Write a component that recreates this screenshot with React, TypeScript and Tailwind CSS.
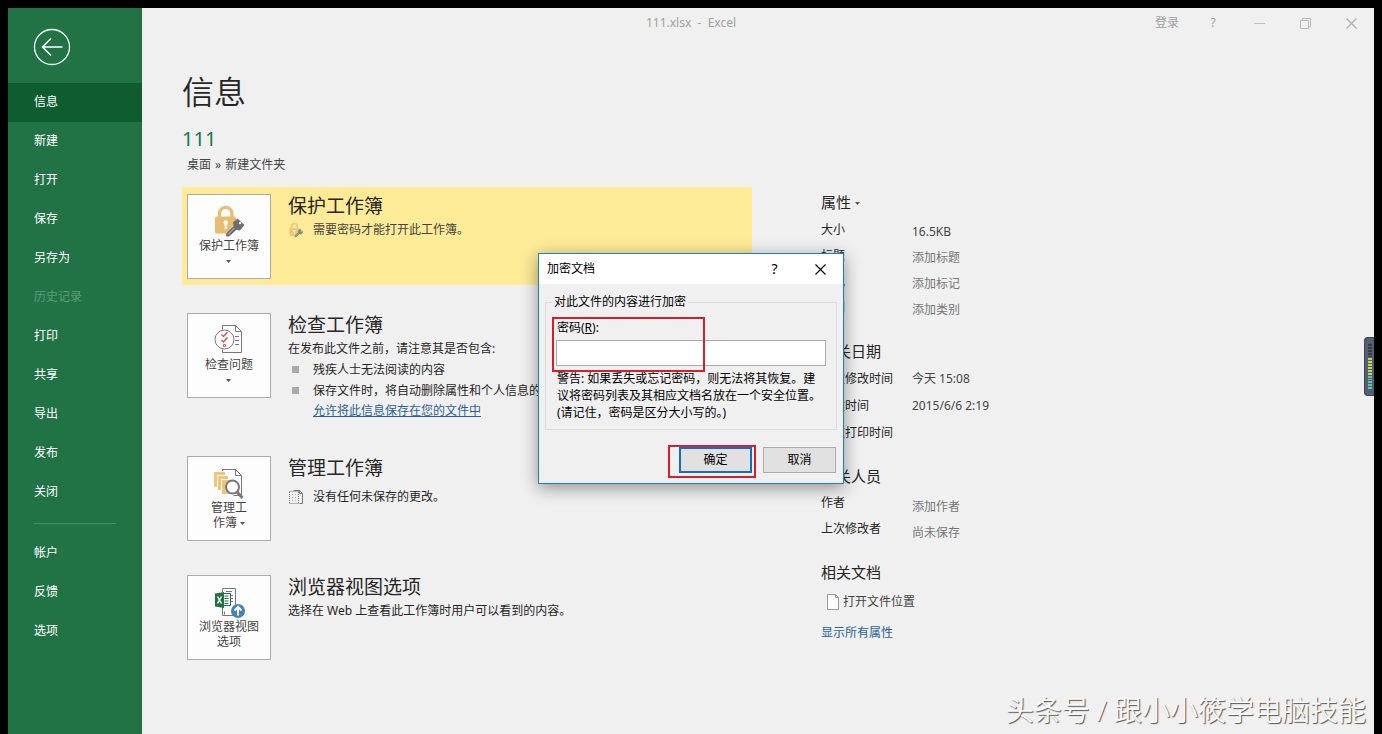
import React, { useState } from 'react';

interface Property {
  label: string;
  value: string;
  muted?: boolean;
}

const mainMenu = ['信息', '新建', '打开', '保存', '另存为', '历史记录', '打印', '共享', '导出', '发布', '关闭'];
const footerMenu = ['帐户', '反馈', '选项'];

const basicProps: Property[] = [
  { label: '大小', value: '16.5KB' },
  { label: '标题', value: '添加标题', muted: true },
  { label: '标记', value: '添加标记', muted: true },
  { label: '类别', value: '添加类别', muted: true },
];

const dateProps: Property[] = [
  { label: '上次修改时间', value: '今天 15:08' },
  { label: '创建时间', value: '2015/6/6 2:19' },
  { label: '上次打印时间', value: '' },
];

const peopleProps: Property[] = [
  { label: '作者', value: '添加作者', muted: true },
  { label: '上次修改者', value: '尚未保存', muted: true },
];

const Caret: React.FC = () => (
  <svg width="5" height="3" viewBox="0 0 5 3" className="inline-block align-middle" fill="#555">
    <path d="M0 0h5L2.5 3z" />
  </svg>
);

const LockKey: React.FC<{ className: string }> = ({ className }) => (
  <svg viewBox="0 0 32 34" className={className}>
    <path d="M6.5 13V9.500a6.200 6.200 0 0 1 12.400 0V13" fill="none" stroke="#e8bd72" strokeWidth="3.200" />
    <path d="M3.500 12.500h18a1.500 1.500 0 0 1 1.500 1.500v4l-9 11.500H3.500A1.500 1.500 0 0 1 2 28V14a1.500 1.500 0 0 1 1.500-1.500z" fill="#e8bd72" />
    <circle cx="12.700" cy="18.500" r="2.200" fill="#fff" />
    <path d="M11.700 19h2v6h-2z" fill="#fff" />
    <path d="M24.500 14.500l7 6.500-4.500 5.500-3.500-.8-7.500 6.800-3-.3.200-2.800 7.300-7.400-.5-3.500z" fill="#6d6d6d" />
    <circle cx="27" cy="19" r="1.200" fill="#fff" />
    <path d="M15 30.500l6.500-6.500" stroke="#ddd" strokeWidth=".8" />
  </svg>
);

const InspectIcon: React.FC = () => (
  <svg viewBox="0 0 32 34" className="h-[34px] w-8" fill="none" stroke="#777">
    <path d="M9.500 6.500v-4h13l6 6v21h-19v-3" fill="#fff" />
    <path d="M22.500 2.500v6h6M22 13.500h4M22 17.500h4M22 21.500h4" />
    <circle cx="11.500" cy="16.500" r="9.500" fill="#fff" />
    <path d="M8.500 11.500l2 2 4-4.500M8.500 17l2 2 4-4.500" stroke="#d9534a" strokeWidth="1.500" />
    <path d="M10.500 21.500h2v2h-2z" stroke="#d9534a" />
  </svg>
);

const ManageIcon: React.FC = () => (
  <svg viewBox="0 0 32 34" className="h-[34px] w-8" fill="none">
    <path d="M9.500 5V3.500h13l6 6v20h-8" fill="#fff" stroke="#777" />
    <path d="M22.500 3.500v6h6" stroke="#777" />
    <path d="M1 6h11v15H1z" fill="#efc57c" />
    <path d="M4.500 9.500h11v15h-11z" fill="#efc57c" stroke="#fff" />
    <path d="M8.500 13.500h11v15h-11z" fill="#efc57c" stroke="#fff" />
    <circle cx="19.500" cy="21" r="6.500" fill="#fff" stroke="#777" strokeWidth="2" />
    <path d="M24 26l5.500 6" stroke="#777" strokeWidth="3" />
  </svg>
);

const BrowserIcon: React.FC = () => (
  <svg viewBox="0 0 32 34" className="h-[34px] w-8" fill="none">
    <path d="M9.500 7V3.500h13v27h-13V22" fill="#fff" stroke="#777" />
    <path d="M13 6.500h6M17 10.500h3M17 13.500h3M17 16.500h3M11.500 26.500v3" stroke="#777" />
    <path d="M9 8.500h8.500v12H9z" fill="#fff" stroke="#217346" />
    <path d="M11.500 11h4M11.500 13.500h4M11.500 16h4M11.500 18.500h4" stroke="#217346" />
    <path d="M2 8.500l9-1.500v16l-9-1.500z" fill="#217346" />
    <path d="M4.500 11.500l4 7M8.500 11.500l-4 7" stroke="#fff" strokeWidth="1.400" />
    <circle cx="25" cy="26" r="7" fill="#4383bd" />
    <path d="M25 30.500v-8M21.500 25.500l3.500-3.500 3.500 3.500" stroke="#fff" strokeWidth="2" />
  </svg>
);

const DraftIcon: React.FC = () => (
  <svg width="16" height="16" viewBox="0 0 16 16" fill="none" stroke="#777">
    <path d="M5.500 1.500h6l3 3v10h-3" />
    <path d="M11.500 1.500v3h3" />
    <path d="M1.500 3v11M1.500 2.500h9M1.500 14.500h9M10.500 3v11" strokeDasharray="1 1" />
    <path d="M4.500 5v7M7.500 5v7" stroke="#aaa" strokeDasharray="1 2" />
  </svg>
);

interface SectionProps {
  icon: React.ReactNode;
  button: React.ReactNode;
  title: string;
  className?: string;
  children: React.ReactNode;
}

const Section: React.FC<SectionProps> = ({ icon, button, title, className, children }) => (
  <section className={`flex items-start gap-[17px] px-[5px] ${className ?? ''}`}>
    <button className="mt-[7px] flex h-[85px] w-[84px] shrink-0 flex-col items-center border border-[#ababab] bg-[#fdfdfd] pt-[9px] text-center leading-[15px] text-[#444]">
      {icon}
      <span>{button}</span>
    </button>
    <div className="min-w-0 pt-[5px] leading-5">
      <h2 className="text-[19px] leading-7">{title}</h2>
      {children}
    </div>
  </section>
);

const PropertyList: React.FC<{ items: Property[]; row: string; labelClass?: string }> = ({ items, row, labelClass }) => (
  <dl>
    {items.map((item) => (
      <div key={item.label} className={`flex items-center ${row}`}>
        <dt className={`w-[91px] shrink-0 ${labelClass ?? ''}`}>{item.label}</dt>
        <dd className={item.muted ? 'text-[#777]' : 'text-[#444]'}>{item.value}</dd>
      </div>
    ))}
  </dl>
);

const EncryptDialog: React.FC = () => {
  const [password, setPassword] = useState('');

  return (
    <div className="absolute inset-0 flex items-center justify-center pt-[3px]">
      <div role="dialog" aria-labelledby="dialog-title" className="relative w-[306px] border border-[#1a7fc4] bg-[#f0f0f0] text-black shadow-[0_4px_16px_rgba(0,0,0,0.4)]">
        <div className="flex h-[30px] items-center bg-white pl-2">
          <h2 id="dialog-title" className="flex-1">加密文档</h2>
          <button aria-label="帮助" className="w-[45px] text-sm">?</button>
          <button aria-label="关闭" className="flex w-[46px] justify-center">
            <svg width="11" height="11" viewBox="0 0 11 11" stroke="#000" strokeWidth="1.100">
              <path d="M.5.5l10 10M10.500.5l-10 10" />
            </svg>
          </button>
        </div>

        <form className="px-1.5 pt-2.5 pb-2.5" onSubmit={(e) => e.preventDefault()}>
          <fieldset className="border border-[#dcdcdc] px-2.5 pb-2">
            <legend className="-ml-1 px-0.5 leading-4">对此文件的内容进行加密</legend>
            <label htmlFor="password" className="mt-2.5 block pl-px leading-4">
              密码(<u>R</u>):
            </label>
            <input
              id="password"
              type="password"
              value={password}
              onChange={(e) => setPassword(e.target.value)}
              className="mt-1 block h-[26px] w-full border border-[#ababab] bg-white px-1 outline-none"
            />
            <p className="mt-1 pl-px leading-[17px] whitespace-nowrap">
              警告: 如果丢失或忘记密码，则无法将其恢复。建
              <br />
              议将密码列表及其相应文档名放在一个安全位置。
              <br />
              (请记住，密码是区分大小写的。)
            </p>
          </fieldset>
          <div className="mt-[17px] flex justify-end gap-[11px] pr-px">
            <button type="submit" className="h-[26px] w-[73px] border-2 border-[#0f6fc0] bg-[#e1e1e1]">确定</button>
            <button type="button" className="h-[26px] w-[73px] border border-[#adadad] bg-[#e1e1e1]">取消</button>
          </div>
        </form>

        {/* Highlight frames */}
        <div className="pointer-events-none absolute top-[63px] left-[13px] h-[55px] w-[153px] border-2 border-[#d61f2c]" />
        <div className="pointer-events-none absolute top-[191px] left-[129px] h-[33px] w-[88px] border-2 border-[#d61f2c]" />
      </div>
    </div>
  );
};

const App: React.FC = () => {
  const [active, setActive] = useState('信息');

  return (
    <div className="relative flex min-h-screen overflow-hidden bg-black px-2 pt-2 font-['Noto_Sans','Noto_Sans_CJK_SC',sans-serif] text-xs text-[#262626]">
      {/* Sidebar */}
      <nav className="w-[134px] shrink-0 bg-[#217346] text-white">
        <div className="h-[75px] pt-5 pl-[25px]">
          <button aria-label="返回" className="block">
            <svg width="38" height="38" viewBox="0 0 38 38" fill="none" stroke="#fff">
              <circle cx="19" cy="19" r="17.500" strokeWidth="1.300" />
              <path d="M29.500 19h-19M18 10.500L9.500 19l8.500 8.500" strokeWidth="1.500" />
            </svg>
          </button>
        </div>
        {mainMenu.map((item) => (
          <button
            key={item}
            disabled={item === '历史记录'}
            onClick={() => setActive(item)}
            className={`block h-[39px] w-full pb-0.5 pl-[26px] text-left disabled:text-[#5a9c77] ${
              active === item ? 'bg-[#0e5c2f]' : ''
            }`}
          >
            {item}
          </button>
        ))}
        <hr className="mx-[26px] mt-[11px] mb-2.5 border-[#439467]" />
        {footerMenu.map((item) => (
          <button key={item} onClick={() => setActive(item)} className="block h-[39px] w-full pb-0.5 pl-[26px] text-left">
            {item}
          </button>
        ))}
      </nav>

      <main className="relative min-w-0 flex-1 bg-[#f0f0f0]">
        {/* Title bar */}
        <header className="flex h-[30px] items-center text-[#a0a0a0]">
          <h1 className="flex-1 pl-[85px] text-center whitespace-pre">111.xlsx  -  Excel</h1>
          <button className="w-[26px] text-left whitespace-nowrap">登录</button>
          <button aria-label="帮助" className="ml-[9px] w-[46px]">?</button>
          <button aria-label="最小化" className="flex w-[46px] justify-center">
            <svg width="11" height="11" viewBox="0 0 11 11" fill="none" stroke="#c0c0c0">
              <path d="M0 5.500h11" />
            </svg>
          </button>
          <button aria-label="还原" className="flex w-[46px] justify-center">
            <svg width="11" height="11" viewBox="0 0 11 11" fill="none" stroke="#b8b8b8">
              <path d="M.5 2.500h8v8h-8zM2.500 2.500v-2h8v8h-2" />
            </svg>
          </button>
          <button aria-label="关闭" className="flex w-[46px] justify-center">
            <svg width="11" height="11" viewBox="0 0 11 11" fill="none" stroke="#b0b0b0" strokeWidth="1.300">
              <path d="M.5.5l10 10M10.500.5l-10 10" />
            </svg>
          </button>
        </header>

        <div className="pt-[34px] pl-10">
          <h1 className="text-[32px] leading-10 font-[350]">信息</h1>
          <p className="mt-[13px] text-xl leading-7 text-[#217346]">111</p>
          <p className="mt-1 flex gap-1 pl-[5px] leading-4 text-[#444]">
            <span>桌面</span>
            <span>»</span>
            <span>新建文件夹</span>
          </p>

          <div className="mt-3.5 flex items-start gap-[69px]">
            <div className="w-[570px]">
              <Section
                className="mb-[21px] h-[98px] bg-[#fdeb98]"
                icon={<LockKey className="h-[34px] w-8" />}
                title="保护工作簿"
                button={<>保护工作簿<br /><Caret /></>}
              >
                <p className="flex items-center gap-[9px] text-[#444]">
                  <LockKey className="h-4 w-4 opacity-80" />
                  需要密码才能打开此工作簿。
                </p>
              </Section>

              <Section
                className="h-[143px]"
                icon={<InspectIcon />}
                title="检查工作簿"
                button={<>检查问题<br /><Caret /></>}
              >
                <p>在发布此文件之前，请注意其是否包含:</p>
                <ul className="leading-[21px]">
                  <li className="flex items-center gap-3.5 pl-1 before:size-[7px] before:bg-[#aaa]">残疾人士无法阅读的内容</li>
                  <li className="flex items-center gap-3.5 pl-1 before:size-[7px] before:bg-[#aaa]">保存文件时，将自动删除属性和个人信息的设置</li>
                </ul>
                <a href="#" className="ml-[25px] text-[#2a6096] underline">允许将此信息保存在您的文件中</a>
              </Section>

              <Section
                className="h-[119px]"
                icon={<ManageIcon />}
                title="管理工作簿"
                button={<>管理工<br />作簿 <Caret /></>}
              >
                <p className="mt-[5px] flex items-center gap-[9px]">
                  <DraftIcon />
                  没有任何未保存的更改。
                </p>
              </Section>

              <Section icon={<BrowserIcon />} title="浏览器视图选项" button={<>浏览器视图<br />选项</>}>
                <p>选择在 Web 上查看此工作簿时用户可以看到的内容。</p>
              </Section>
            </div>

            {/* Document properties */}
            <aside className="min-w-0 flex-1 pt-[3px]">
              <h3 className="mb-[5px] text-[15px] leading-6">
                <button>属性 <Caret /></button>
              </h3>
              <PropertyList items={basicProps} row="h-[26px]" labelClass="pb-1" />
              <h3 className="mt-4 mb-0.5 text-[15px] leading-6">相关日期</h3>
              <PropertyList items={dateProps} row="h-[27px]" />
              <h3 className="mt-[18px] mb-1.5 text-[15px] leading-6">相关人员</h3>
              <PropertyList items={peopleProps} row="h-[26px]" labelClass="pb-2" />
              <h3 className="mt-3.5 mb-2 text-[15px] leading-6">相关文档</h3>
              <a href="#" className="flex items-center gap-1 pl-1.5 leading-5 text-[#444]">
                <svg width="12" height="16" viewBox="0 0 12 16" fill="#fdfdfd" stroke="#999">
                  <path d="M.5.5h8l3 3v12H.5zM8.500.5v3h3" />
                </svg>
                打开文件位置
              </a>
              <a href="#" className="mt-[11px] block leading-5 text-[#2a6096]">显示所有属性</a>
            </aside>
          </div>
        </div>

        {/* Floating meter at the window edge */}
        <div className="absolute top-[329px] right-0 flex h-[59px] w-2.5 flex-col gap-px rounded-l border border-r-0 border-[#3c4252] bg-[#565e74] px-[3px] py-1.5">
          {Array.from({ length: 16 }, (_, i) => (
            <span
              key={i}
              className={`h-0.5 w-1 ${i < 5 ? 'bg-[#353b4b]' : i < 11 ? 'bg-[#c8d256]' : 'bg-[#5fc8a4]'}`}
            />
          ))}
        </div>

        <p className="absolute right-2 bottom-1 text-[28px] leading-10 font-[350] whitespace-nowrap text-[#f8f8f8] [text-shadow:1px_1px_1px_#555]">
          头条号 / 跟小小筱学电脑技能
        </p>
      </main>

      <EncryptDialog />
    </div>
  );
};

export default App;
